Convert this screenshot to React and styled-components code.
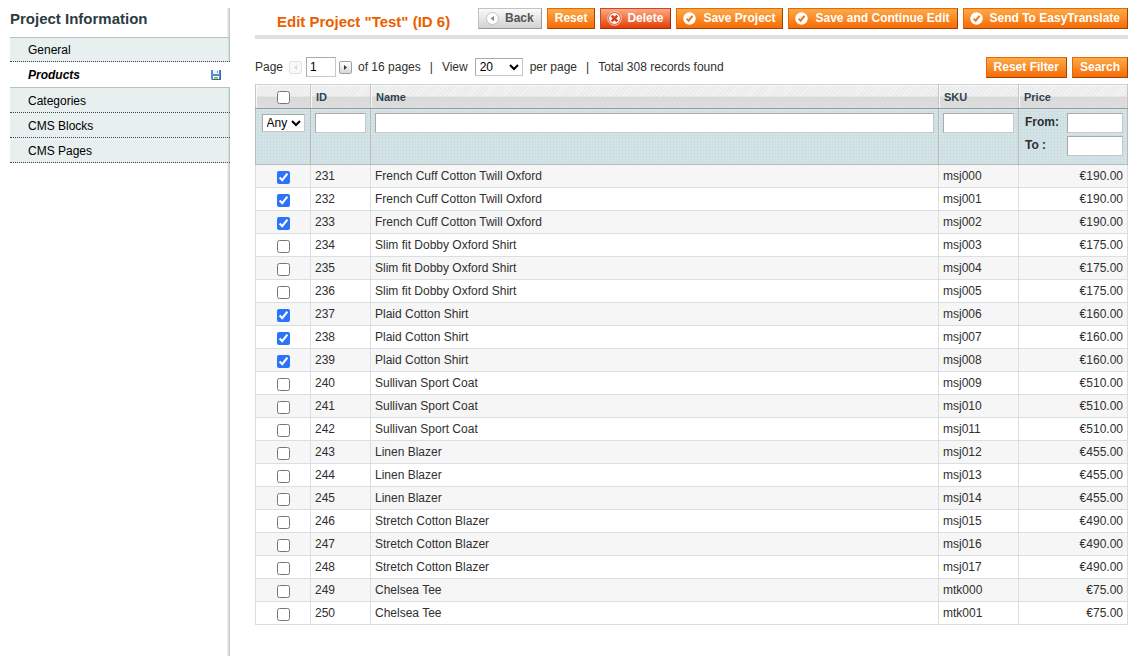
import React from 'react';
import styled, { createGlobalStyle, css } from 'styled-components';

const Global = createGlobalStyle`
  *, *::before, *::after { box-sizing: border-box; }
  body {
    margin: 0;
    background: #fff;
    color: #2f2f2f;
    font: 12px/18px Arial, "Liberation Sans", sans-serif;
  }
  button, input, select { font-family: inherit; margin: 0; }
`;

const Page = styled.div`
  display: flex;
  align-items: stretch;
  padding: 8px 6px 8px 10px;
`;

const Sidebar = styled.aside`
  flex: 0 0 220px;
  min-height: 648px;
  background: linear-gradient(to right, #efefef 0 1px, #dcdcdc 1px 2px, #c9c9c9 2px 3px) right / 3px 100% no-repeat;
`;

const SideTitle = styled.h3`
  margin: 0;
  height: 29px;
  color: #2d3b42;
  font-size: 15px;
  line-height: 22px;
`;

const Tabs = styled.ul`
  margin: 0;
  padding: 0;
  list-style: none;
  border-top: 1px solid #bebebe;
`;

const Tab = styled.a`
  display: flex;
  align-items: center;
  justify-content: space-between;
  height: 25px;
  padding: 1px 9px 0 18px;
  border-bottom: 1px dotted #444;
  background: #e7efef;
  box-shadow: inset -1px 0 #b4c6c2, inset -2px 0 #d3dfdd;
  color: #000;
  text-decoration: none;
  li:first-child > & { height: 24px; }
  ${({ $active }) => $active && css`
    height: 26px;
    border-bottom: 1px solid #bebebe;
    background: #fff;
    box-shadow: none;
    font-weight: bold;
    font-style: italic;
  `}
`;

const Main = styled.main`
  flex: 1;
  min-width: 0;
  padding-left: 25px;
`;

const Header = styled.header`
  display: flex;
  justify-content: space-between;
  height: 31px;
  padding-left: 22px;
  border-bottom: 4px solid #dfdfdf;
`;

const Title = styled.h3`
  margin: 0;
  color: #eb5e00;
  font-size: 15px;
  line-height: 27px;
  white-space: nowrap;
`;

const Buttons = styled.div`
  display: flex;
  gap: 5px;
`;

const tones = {
  orange: css`
    border-color: #ed6502 #a04300 #a04300 #ed6502;
    background: linear-gradient(#fbab48, #f76b07);
    color: #fff;
  `,
  red: css`
    border-color: #d04526 #a02c10 #a02c10 #d04526;
    background: linear-gradient(#fbaa82, #e53e05);
    color: #fff;
  `,
  gray: css`
    border-color: #c2c2c2 #989898 #989898 #c2c2c2;
    background: linear-gradient(#fafafa, #d2d2d2);
    color: #555;
  `,
};

const Button = styled.button`
  display: flex;
  align-items: center;
  gap: ${({ $gap }) => $gap || 7}px;
  height: 21px;
  padding: 0 7px 1px ${({ $icon }) => ($icon ? 6 : 7)}px;
  border: 1px solid;
  font-size: 12px;
  font-weight: bold;
  line-height: 16px;
  white-space: nowrap;
  cursor: pointer;
  ${({ $tone }) => tones[$tone || 'orange']}
`;

const Toolbar = styled.div`
  display: flex;
  justify-content: space-between;
  padding: 18px 0 6px;
`;

const Pager = styled.div`
  display: flex;
  align-items: center;
  height: 19px;
  white-space: nowrap;
`;

const Label = styled.label`
  display: flex;
  align-items: center;
  gap: 7px;
`;

const Divider = styled.span`
  margin: 0 9px;
`;

const Arrow = styled.button`
  display: flex;
  align-items: center;
  justify-content: center;
  width: 13px;
  height: 13px;
  margin: ${({ $first }) => ($first ? '2px 4px 0 6px' : '2px 6px 0 3px')};
  padding: 0;
  border: 1px solid #a0a0a0;
  border-radius: 2px;
  background: linear-gradient(#fff, #d8d8d8);
  color: #2d3b42;
  &:disabled { border-color: #e2e2e2; background: #f8f8f8; color: #d8d8d8; }
`;

const field = css`
  border: 1px solid;
  border-color: #aaa #c8c8c8 #c8c8c8 #aaa;
  border-radius: 0;
  background-color: #fff;
  color: #000;
  font-size: 12px;
`;

const Text = styled.input`
  ${field}
  display: block;
  width: ${({ $width }) => ($width ? `${$width}px` : '100%')};
  height: 20px;
  padding: 0 3px;
`;

const Select = styled.select`
  ${field}
  display: block;
  width: ${({ $width }) => $width}px;
  height: 18px;
  padding: 0;
`;

const Grid = styled.table`
  width: 100%;
  table-layout: fixed;
  border-collapse: collapse;
  border: 1px solid #cbd3d4;
`;

const HeadCell = styled.th`
  height: 24px;
  padding: 0 5px;
  border: 1px solid #c5c5c5;
  border-top-color: #cbd3d4;
  border-bottom-color: #999;
  background:
    repeating-linear-gradient(135deg, #ffffff00 0 2px, #ffffff66 2px 3px) top / 100% 12px no-repeat,
    linear-gradient(#ececec 50%, #d9d9d9 50%, #dedede);
  box-shadow: inset 1px 1px #f8f8f8;
  color: #2d444f;
  font-size: 11px;
  text-align: left;
`;

const FilterCell = styled.td`
  height: 56px;
  padding: 4px;
  border: 1px solid #bbb;
  background:
    repeating-linear-gradient(to right, #ffffff33 0 1px, transparent 1px 3px),
    repeating-linear-gradient(#ffffff33 0 1px, transparent 1px 3px),
    #c8dce0;
  vertical-align: top;
  > select { margin: 1px auto 0; }
`;

const FilterLine = styled.label`
  display: flex;
  align-items: flex-start;
  justify-content: space-between;
  margin-bottom: 3px;
  padding-left: 2px;
  font-weight: bold;
  &:last-child { margin-bottom: 0; }
`;

const Row = styled.tr`
  background: #fff;
  &:nth-child(odd) { background: #f6f6f6; }
`;

const Cell = styled.td`
  height: 23px;
  padding: 0 4px;
  border: 1px solid #dadfe0;
  text-align: ${({ $align }) => $align || 'left'};
`;

const Check = styled.input`
  display: block;
  width: 13px;
  height: 13px;
  accent-color: #2a73fa;
  && { margin: ${({ $head }) => ($head ? 1 : 3)}px auto 0; }
`;

const OkIcon = () => (
  <svg width="13" height="13" viewBox="0 0 13 13" aria-hidden="true">
    <circle cx="6.500" cy="6.500" r="6.200" fill="#fff" />
    <path d="M3.600 6.600 5.700 8.700 9.500 3.900" fill="none" stroke="#ee7a1c" strokeWidth="2" />
  </svg>
);

const BackIcon = () => (
  <svg width="15" height="15" viewBox="0 0 15 15" aria-hidden="true">
    <circle cx="7.500" cy="7.500" r="6" fill="#fff" stroke="#c4c4c4" />
    <path d="M9 5v5L5.500 7.500z" fill="#888" />
  </svg>
);

const DeleteIcon = () => (
  <svg width="15" height="15" viewBox="0 0 15 15" aria-hidden="true">
    <circle cx="7.500" cy="7.500" r="6.800" fill="#e0572e" stroke="#fbc3ab" />
    <circle cx="7.500" cy="7.500" r="5.400" fill="#fff" />
    <path d="M4.700 4.700l5.600 5.600M10.300 4.700l-5.600 5.600" stroke="#d4421b" strokeWidth="2.600" />
  </svg>
);

const DiskIcon = () => (
  <svg width="10" height="10" viewBox="0 0 10 10" role="img" aria-label="Changed">
    <path d="M0 0h10v10H1L0 9z" fill="#5b8bd6" />
    <path d="M9 0h1v10H1V9h8z" fill="#3763b0" />
    <path d="M2 0h6v4H2z" fill="#f4f8fd" />
    <path d="M6 1h1v2H6z" fill="#5b8bd6" />
    <path d="M2 6h6v3H2z" fill="#f5faf0" />
    <path d="M3 7h4v2H3z" fill="#8fcb4a" />
  </svg>
);

const ArrowIcon = ({ left }) => (
  <svg width="5" height="5" viewBox="0 0 5 5" aria-hidden="true">
    <path d={left ? 'M4 0v5L1 2.500z' : 'M1 0v5l3-2.500z'} fill="currentColor" />
  </svg>
);

const tabs = ['General', 'Products', 'Categories', 'CMS Blocks', 'CMS Pages'];

const groups = [
  ['French Cuff Cotton Twill Oxford', 190, true],
  ['Slim fit Dobby Oxford Shirt', 175, false],
  ['Plaid Cotton Shirt', 160, true],
  ['Sullivan Sport Coat', 510, false],
  ['Linen Blazer', 455, false],
  ['Stretch Cotton Blazer', 490, false],
];

const products = Array.from({ length: 20 }, (_, i) => {
  const [name, price, checked] = groups[Math.floor(i / 3)] || ['Chelsea Tee', 75, false];
  const sku = i < 18 ? `msj${String(i).padStart(3, '0')}` : `mtk${String(i - 18).padStart(3, '0')}`;
  return { id: 231 + i, name, price, checked, sku };
});

export default function App() {
  return (
    <>
      <Global />
      <Page>
        <Sidebar>
          <SideTitle>Project Information</SideTitle>
          <Tabs>
            {tabs.map((name) => (
              <li key={name}>
                <Tab href="#" $active={name === 'Products'}>
                  {name}
                  {name === 'Products' && <DiskIcon />}
                </Tab>
              </li>
            ))}
          </Tabs>
        </Sidebar>
        <Main>
          <Header>
            <Title>Edit Project "Test" (ID 6)</Title>
            <Buttons>
              <Button $tone="gray" $icon $gap={5}><BackIcon />Back</Button>
              <Button>Reset</Button>
              <Button $tone="red" $icon $gap={5}><DeleteIcon />Delete</Button>
              <Button $icon><OkIcon />Save Project</Button>
              <Button $icon><OkIcon />Save and Continue Edit</Button>
              <Button $icon><OkIcon />Send To EasyTranslate</Button>
            </Buttons>
          </Header>
          <Toolbar>
            <Pager>
              <label htmlFor="page">Page</label>
              <Arrow $first disabled aria-label="Previous page"><ArrowIcon left /></Arrow>
              <Text id="page" $width={30} defaultValue="1" />
              <Arrow aria-label="Next page"><ArrowIcon /></Arrow>
              <span>of 16 pages</span>
              <Divider>|</Divider>
              <Label>
                View
                <Select $width={48} defaultValue="20"><option>20</option><option>50</option></Select>
                per page
              </Label>
              <Divider>|</Divider>
              <span>Total 308 records found</span>
            </Pager>
            <Buttons>
              <Button>Reset Filter</Button>
              <Button>Search</Button>
            </Buttons>
          </Toolbar>
          <Grid>
            <colgroup>
              <col width="55" />
              <col width="60" />
              <col />
              <col width="80" />
              <col width="109" />
            </colgroup>
            <thead>
              <tr>
                <HeadCell><Check $head type="checkbox" aria-label="Select all" /></HeadCell>
                <HeadCell>ID</HeadCell>
                <HeadCell>Name</HeadCell>
                <HeadCell>SKU</HeadCell>
                <HeadCell>Price</HeadCell>
              </tr>
              <tr>
                <FilterCell>
                  <Select $width={43} aria-label="Selected"><option>Any</option><option>Yes</option><option>No</option></Select>
                </FilterCell>
                <FilterCell><Text aria-label="ID" /></FilterCell>
                <FilterCell><Text aria-label="Name" /></FilterCell>
                <FilterCell><Text aria-label="SKU" /></FilterCell>
                <FilterCell>
                  <FilterLine>From:<Text $width={56} /></FilterLine>
                  <FilterLine>To :<Text $width={56} /></FilterLine>
                </FilterCell>
              </tr>
            </thead>
            <tbody>
              {products.map((p) => (
                <Row key={p.id}>
                  <Cell><Check type="checkbox" defaultChecked={p.checked} aria-label={`Select ${p.id}`} /></Cell>
                  <Cell>{p.id}</Cell>
                  <Cell>{p.name}</Cell>
                  <Cell>{p.sku}</Cell>
                  <Cell $align="right">€{p.price}.00</Cell>
                </Row>
              ))}
            </tbody>
          </Grid>
        </Main>
      </Page>
    </>
  );
}
